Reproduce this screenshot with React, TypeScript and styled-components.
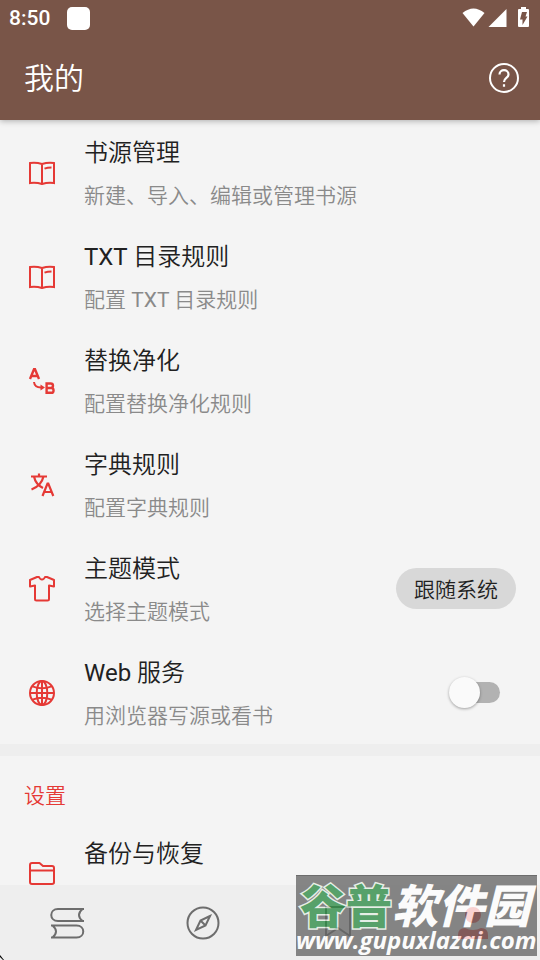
import React, { useState } from "react";
import styled, { createGlobalStyle } from "styled-components";

const GlobalStyle = createGlobalStyle`
  * { box-sizing: border-box; }
  body {
    margin: 0;
    background: #f4f4f4;
    font-family: Roboto, "Noto Sans CJK SC DemiLight", "Noto Sans CJK SC Light", "Noto Sans CJK SC", sans-serif;
    color: #212121;
  }
  button { font: inherit; color: inherit; border: 0; padding: 0; background: none; }
  h1, h2, h3, p { margin: 0; font-weight: 400; }
`;

const Screen = styled.div`
  position: relative;
  display: flex;
  flex-direction: column;
  height: 100vh;
  overflow: hidden;
`;

const Header = styled.header`
  position: relative;
  z-index: 1;
  flex: none;
  background: #795548;
  color: #fff;
  box-shadow: 0 1px 6px rgba(0, 0, 0, 0.3);
`;

const StatusBar = styled.div`
  display: flex;
  align-items: center;
  height: 36px;
  padding: 0 9px;
  gap: 17px;
  font-size: 21px;
  font-weight: 500;
`;

const Notice = styled.span`
  width: 23px;
  height: 23px;
  border-radius: 5px;
  background: #fff;
`;

const StatusIcons = styled.svg`
  margin-left: auto;
  width: 70px;
  height: 24px;
`;

const TitleBar = styled.div`
  display: flex;
  align-items: center;
  justify-content: space-between;
  height: 84px;
  padding: 0 20px 0 24px;
`;

const PageTitle = styled.h1`
  padding-top: 2px;
  font-size: 30px;
  line-height: 40px;
`;

const HelpButton = styled.button`
  display: flex;
`;

const Content = styled.main`
  flex: 1;
  min-height: 0;
  overflow: hidden;
`;

const Row = styled.div`
  display: grid;
  grid-template-columns: 36px 1fr auto;
  column-gap: 24px;
  align-items: center;
  height: 104px;
  padding: 0 24px;
`;

const RowText = styled.div`
  padding-top: 2px;
`;

const RowIcon = styled.svg`
  width: 36px;
  height: 36px;
  fill: none;
  stroke: #e53935;
  stroke-width: 2;
`;

const RowTitle = styled.h3`
  font-size: 24px;
  line-height: 36px;
`;

const RowSummary = styled.p`
  margin-top: 9px;
  min-height: 32px;
  font-size: 21px;
  line-height: 32px;
  color: #8a8a8a;
`;

const ModeButton = styled.button`
  height: 41px;
  padding: 0 18px;
  border-radius: 21px;
  background: #d8d8d8;
  font-size: 21px;
`;

const Switch = styled.input`
  appearance: none;
  display: flex;
  align-items: center;
  width: 51px;
  height: 31px;
  margin: 0 16px 0 0;

  &::before {
    content: "";
    flex: none;
    z-index: 1;
    width: 31px;
    height: 31px;
    border-radius: 50%;
    background: #fafafa;
    box-shadow: 0 1px 3px rgba(0, 0, 0, 0.35);
  }
  &::after {
    content: "";
    flex: none;
    width: 36px;
    height: 21px;
    margin-left: -16px;
    border-radius: 11px;
    background: #b2b2b2;
  }
  &:checked { flex-direction: row-reverse; }
  &:checked::before { background: #e53935; }
  &:checked::after { margin: 0 -16px 0 0; }
`;

const Divider = styled.hr`
  height: 12px;
  margin: 0;
  border: 0;
  background: #eee;
`;

const SectionTitle = styled.h2`
  padding: 24px 24px 9px;
  font-size: 21px;
  line-height: 32px;
  color: #e53935;
`;

const Nav = styled.nav`
  flex: none;
  display: grid;
  grid-template-columns: repeat(4, 1fr);
  height: 75px;
  background: #eee;
`;

const NavButton = styled.button<{ $active?: boolean }>`
  display: flex;
  align-items: center;
  justify-content: center;
  color: ${(p) => (p.$active ? "#e53935" : "#6d6d6d")};
`;

const NavIcon = styled.svg`
  width: 36px;
  height: 36px;
  fill: none;
  stroke: currentColor;
  stroke-width: 2;
`;

const Watermark = styled.div`
  position: absolute;
  right: 3px;
  bottom: 4px;
  z-index: 2;
  width: 241px;
  height: 81px;
  background: #656565;
  border-top: 1px solid #444;
  color: #fff;
  opacity: 0.77;
  white-space: nowrap;
  pointer-events: none;
`;

const SiteName = styled.div`
  display: flex;
  padding: 4px 0 0 4px;
  font-family: "Noto Sans CJK SC", sans-serif;
  font-size: 46px;
  font-weight: 900;
  font-style: italic;
  line-height: 46px;
`;

const SiteNameGreen = styled.span`
  color: #2b8b43;
  font-style: normal;
  paint-order: stroke fill;
  -webkit-text-stroke: 3px #e4efe4;
`;

const SiteUrl = styled.div`
  font-family: "Open Sans", sans-serif;
  font-size: 24px;
  font-weight: 700;
  font-style: italic;
  line-height: 28px;
`;

const Cursor = styled.svg`
  position: absolute;
  left: 0;
  bottom: 0;
  width: 4px;
  height: 5px;
`;

const BookIcon = () => (
  <>
    <path d="M6 8q6-1 12 1q6-2 12-1v20q-6-1-12 1q-6-2-12-1zM18 9v20" />
    <path d="M20.5 13.6q3-1.2 7-1.2" />
  </>
);

const SwapIcon = () => (
  <>
    <path d="M6 16L10 6.3h1l4 9.700M7.500 13h6" strokeWidth="2.4" />
    <path d="M10 19c.4 4 3 5.500 7 5.500" strokeWidth="2" />
    <path d="M16.500 21.500l4.500 3-4.500 3z" fill="#e53935" stroke="none" />
    <path d="M22.600 20.500h4c3.200 0 3.200 4.500 0 4.500h-4zM22.600 25h4.700c3 0 3 4.800 0 4.800h-4.700z" strokeWidth="2.4" />
  </>
);

const TranslateIcon = () => (
  <>
    <path d="M7 9.500h16M15 6.500v3M10 9.500c1 5 4 9 9 11.500M19.500 9.500c-1.400 6-5.500 10.500-12 13" strokeWidth="2.2" />
    <path d="M18.500 29l5-12.500h.8l5 12.500M20.500 25h6.800" strokeWidth="2.2" />
  </>
);

const ShirtIcon = () => (
  <path
    d="M13 6L6 9v6.500l5-1v13.500q0 1.500 1.500 1.500h11q1.500 0 1.500-1.500V14.500l5 1v-6.500l-7-3h-2q-1 2.500-3 2.500t-3-2.500z"
    strokeLinejoin="round"
  />
);

const GlobeIcon = () => (
  <>
    <circle cx="18" cy="18" r="12" />
    <ellipse cx="18" cy="18" rx="5.3" ry="12" />
    <path d="M6 18h24M18 6v24M8.500 11.300q9.500 4 19 0M8.500 24.700q9.500-4 19 0" />
  </>
);

const FolderIcon = () => (
  <path
    d="M6 14.500h24M8 7h7.500l3.500 3h9q2 0 2 2v14.300q0 1.700-2 1.700H8q-2 0-2-2V9q0-2 2-2z"
    strokeLinejoin="round"
  />
);

type Item = {
  icon: () => React.ReactElement;
  title: string;
  summary?: string;
  control?: "mode" | "switch";
};

const items: Item[] = [
  { icon: BookIcon, title: "书源管理", summary: "新建、导入、编辑或管理书源" },
  { icon: BookIcon, title: "TXT 目录规则", summary: "配置 TXT 目录规则" },
  { icon: SwapIcon, title: "替换净化", summary: "配置替换净化规则" },
  { icon: TranslateIcon, title: "字典规则", summary: "配置字典规则" },
  { icon: ShirtIcon, title: "主题模式", summary: "选择主题模式", control: "mode" },
  { icon: GlobeIcon, title: "Web 服务", summary: "用浏览器写源或看书", control: "switch" },
];

function SettingRow({ icon: Icon, title, summary, control }: Item) {
  const [on, setOn] = useState(false);
  return (
    <Row>
      <RowIcon viewBox="0 -1 36 36" aria-hidden="true"><Icon /></RowIcon>
      <RowText>
        <RowTitle>{title}</RowTitle>
        <RowSummary>{summary}</RowSummary>
      </RowText>
      {control === "mode" && <ModeButton>跟随系统</ModeButton>}
      {control === "switch" && (
        <Switch type="checkbox" role="switch" aria-label={title} checked={on} onChange={() => setOn(!on)} />
      )}
    </Row>
  );
}

export default function App() {
  return (
    <Screen>
      <GlobalStyle />
      <Header>
        <StatusBar>
          <span>8:50</span>
          <Notice />
          <StatusIcons viewBox="0 0 70 24" fill="#fff" aria-hidden="true">
            <path d="M1.500 7Q12.500-2 23.500 7L12.500 20.500z" />
            <path d="M45.500 3v18H27.500z" />
            <path d="M60 1h5v2h2q1 0 1 1v16q0 1-1 1h-9q-1 0-1-1V4q0-1 1-1h2z" />
            <path d="M61 6h5l-1.500 4.500h2L61.500 19v-5.500H59z" fill="#795548" />
          </StatusIcons>
        </StatusBar>
        <TitleBar>
          <PageTitle>我的</PageTitle>
          <HelpButton aria-label="帮助">
            <svg width="32" height="32" viewBox="0 0 32 32" fill="none" stroke="#fff" strokeWidth="2">
              <circle cx="16" cy="16" r="14" />
              <path d="M11.500 12.500c0-5.800 9-5.800 9 0 0 3.500-4.500 3.500-4.500 7.500M16 22.300v2.400" strokeWidth="2.2" />
            </svg>
          </HelpButton>
        </TitleBar>
      </Header>

      <Content>
        {items.map((item) => <SettingRow key={item.title} {...item} />)}
        <Divider />
        <SectionTitle>设置</SectionTitle>
        <SettingRow icon={FolderIcon} title="备份与恢复" />
      </Content>

      <Nav>
        <NavButton aria-label="书架">
          <NavIcon viewBox="1 0 36 36">
            <path d="M35 4H9C0 4 0 16 9 16H35M33.500 4q-7 6 0 12M2 20.500h25.500c9 0 9 12 0 12H2M3.500 20.500q7 6 0 12" />
          </NavIcon>
        </NavButton>
        <NavButton aria-label="发现">
          <NavIcon viewBox="0 0 36 36">
            <circle cx="18" cy="18" r="15.500" />
            <path d="M25 11l-9.500 4.500L11 25l9.500-4.500zM15.500 15.500l5 5" />
          </NavIcon>
        </NavButton>
        <NavButton aria-label="订阅">
          <NavIcon viewBox="0 0 36 36">
            <path d="M6 2h24v29l-12-8-12 8z" />
          </NavIcon>
        </NavButton>
        <NavButton aria-label="我的" $active>
          <NavIcon viewBox="0 0 36 36">
            <path d="M10 10a8 8 0 1 0 16 0a8 8 0 1 0-16 0M3 34v-4q0-7 7-7 8 4 16 0 7 0 7 7v4z" fill="currentColor" stroke="none" />
          </NavIcon>
        </NavButton>
      </Nav>

      <Watermark>
        <SiteName><SiteNameGreen>谷普</SiteNameGreen>软件园</SiteName>
        <SiteUrl>www.gupuxlazai.com</SiteUrl>
      </Watermark>
      <Cursor viewBox="0 0 4 5" aria-hidden="true"><path d="M0 0v2l3 3h1z" /></Cursor>
    </Screen>
  );
}
